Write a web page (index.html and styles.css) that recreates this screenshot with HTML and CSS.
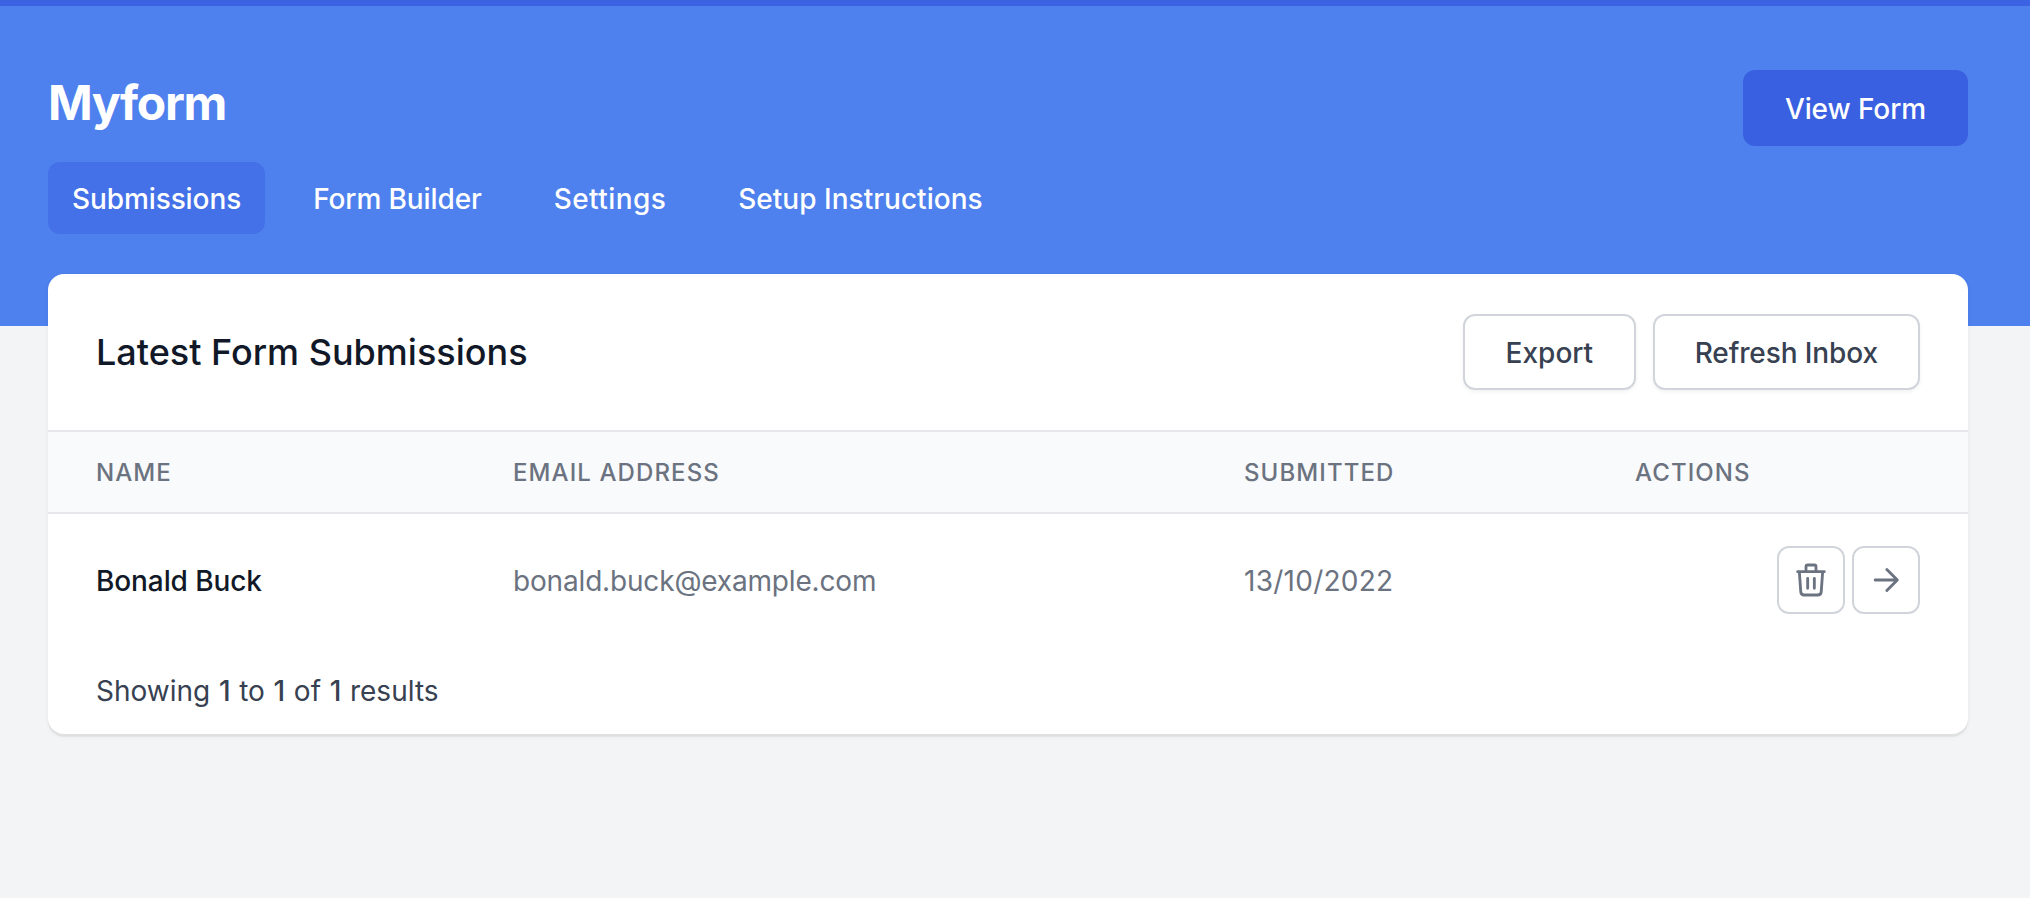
FILE: index.html
```html
<!DOCTYPE html>
<html lang="en">
<head>
<meta charset="utf-8">
<title>Myform</title>
<link rel="stylesheet" href="styles.css">
</head>
<body>
<header class="hero">
  <div class="hero-top">
    <h1 class="brand">Myform</h1>
    <a class="view-btn">View Form</a>
  </div>
  <nav class="tabs">
    <a class="tab tab-active">Submissions</a>
    <a class="tab">Form Builder</a>
    <a class="tab tab-settings">Settings</a>
    <a class="tab tab-setup">Setup Instructions</a>
  </nav>
</header>
<main class="card">
  <div class="card-head">
    <h2 class="card-title">Latest Form Submissions</h2>
    <div class="card-actions">
      <button class="btn">Export</button>
      <button class="btn btn-wide">Refresh Inbox</button>
    </div>
  </div>
  <table class="table">
    <colgroup>
      <col class="col-name"><col class="col-email"><col class="col-date"><col class="col-actions">
    </colgroup>
    <thead>
      <tr><th>Name</th><th>Email Address</th><th>Submitted</th><th>Actions</th></tr>
    </thead>
    <tbody>
      <tr>
        <td class="cell-name">Bonald Buck</td>
        <td class="cell-muted cell-email">bonald.buck@example.com</td>
        <td class="cell-muted cell-date">13/10/2022</td>
        <td class="cell-actions">
          <div class="row-actions">
            <button class="icon-btn" aria-label="Delete">
              <svg class="icon" viewBox="0 0 24 24" fill="none" stroke="currentColor" stroke-width="1.7" stroke-linecap="round" stroke-linejoin="round"><path d="M19 7l-.867 12.142A2 2 0 0 1 16.138 21H7.862a2 2 0 0 1-1.995-1.858L5 7m5 4v6m4-6v6m1-10V4a1 1 0 0 0-1-1h-4a1 1 0 0 0-1 1v3M4 7h16"/></svg>
            </button>
            <button class="icon-btn" aria-label="Open">
              <svg class="icon" viewBox="0 0 24 24" fill="none" stroke="currentColor" stroke-width="1.7" stroke-linecap="round" stroke-linejoin="round"><path d="M5.500 12h13M12.500 5.700l6.300 6.300-6.300 6.300"/></svg>
            </button>
          </div>
        </td>
      </tr>
    </tbody>
  </table>
  <p class="summary">Showing <b>1</b> to <b>1</b> of <b>1</b> results</p>
</main>
</body>
</html>
```
FILE: styles.css
```css
* { box-sizing: border-box; }
html, body { margin: 0; padding: 0; }
body {
  background: #f3f4f6;
  font-family: Inter, "Liberation Sans", sans-serif;
  color: #111827;
  height: 898px;
  overflow: hidden;
}
.hero {
  background: #4e81ee;
  border-top: 6px solid #3b62e2;
  height: 326px;
  padding: 64px 62px 0 48px;
}
.hero-top {
  display: flex;
  justify-content: space-between;
  align-items: flex-start;
  margin-bottom: 16px;
}
.brand {
  margin: 0;
  font-size: 48px;
  line-height: 64px;
  font-weight: 650;
  letter-spacing: -1.35px;
  padding-top: 1px;
  height: 64px;
  color: #fff;
}
.view-btn {
  display: block;
  background: #3a60e2;
  color: #fff;
  font-size: 28px;
  line-height: 40px;
  font-weight: 550;
  letter-spacing: -.1px;
  padding: 19px 42px 17px;
  border-radius: 12px;
}
.tabs { display: flex; gap: 24px; }
.tab {
  color: #fff;
  font-size: 28px;
  line-height: 40px;
  font-weight: 550;
  letter-spacing: -.1px;
  padding: 17px 24px 15px;
  border-radius: 12px;
}
.tab-active { background: #4470e8; }
.tab-settings { letter-spacing: .4px; }
.tab-setup { letter-spacing: .03px; }
.card {
  width: 1920px;
  margin: -52px 0 0 48px;
  background: #fff;
  border-radius: 16px;
  box-shadow: 0 3px 1px rgba(0, 0, 0, .05), 0 2px 5px rgba(0, 0, 0, .05);
  overflow: hidden;
}
.card-head {
  display: flex;
  justify-content: space-between;
  align-items: center;
  padding: 40px 48px;
  border-bottom: 2px solid #e5e7eb;
}
.card-title {
  margin: 0;
  font-size: 36px;
  line-height: 48px;
  font-weight: 500;
  color: #111827;
}
.card-actions { display: flex; gap: 17px; }
.btn {
  font: inherit;
  font-size: 28px;
  line-height: 40px;
  font-weight: 500;
  color: #374151;
  background: #fff;
  border: 2px solid #d1d5db;
  border-radius: 12px;
  padding: 17px 40.5px 15px;
  box-shadow: 0 2px 4px rgba(0, 0, 0, .05);
}
.btn-wide { letter-spacing: -.1px; padding-left: 40px; padding-right: 40px; }
.table { width: 100%; border-collapse: collapse; table-layout: fixed; }
.col-name { width: 417px; }
.col-email { width: 731px; }
.col-date { width: 391px; }
.col-actions { width: 381px; }
th {
  background: #f9fafb;
  border-bottom: 2px solid #e5e7eb;
  padding: 25px 48px 23px;
  font-size: 24px;
  line-height: 32px;
  font-weight: 500;
  letter-spacing: 1.1px;
  text-transform: uppercase;
  text-align: left;
  color: #6b7280;
  white-space: nowrap;
}
td {
  padding: 33px 48px 31px;
  font-size: 28px;
  line-height: 40px;
  white-space: nowrap;
}
.cell-name { font-weight: 500; color: #111827; letter-spacing: -.1px; }
.cell-muted { color: #6b7280; }
.cell-email { letter-spacing: -.17px; }
.cell-date { letter-spacing: .26px; }
.cell-actions { padding-top: 32px; padding-bottom: 32px; }
.row-actions { display: flex; justify-content: flex-end; gap: 7px; }
.icon-btn {
  display: flex;
  align-items: center;
  justify-content: center;
  width: 68px;
  height: 68px;
  padding: 0;
  background: #fff;
  border: 2px solid #d1d5db;
  border-radius: 12px;
  color: #6b7280;
}
.icon { width: 40px; height: 40px; display: block; }
.summary {
  margin: 0;
  padding: 25px 48px 23px;
  font-size: 28px;
  line-height: 40px;
  color: #374151;
}
.summary b { font-weight: 550; padding: 0 .8px; }
```
